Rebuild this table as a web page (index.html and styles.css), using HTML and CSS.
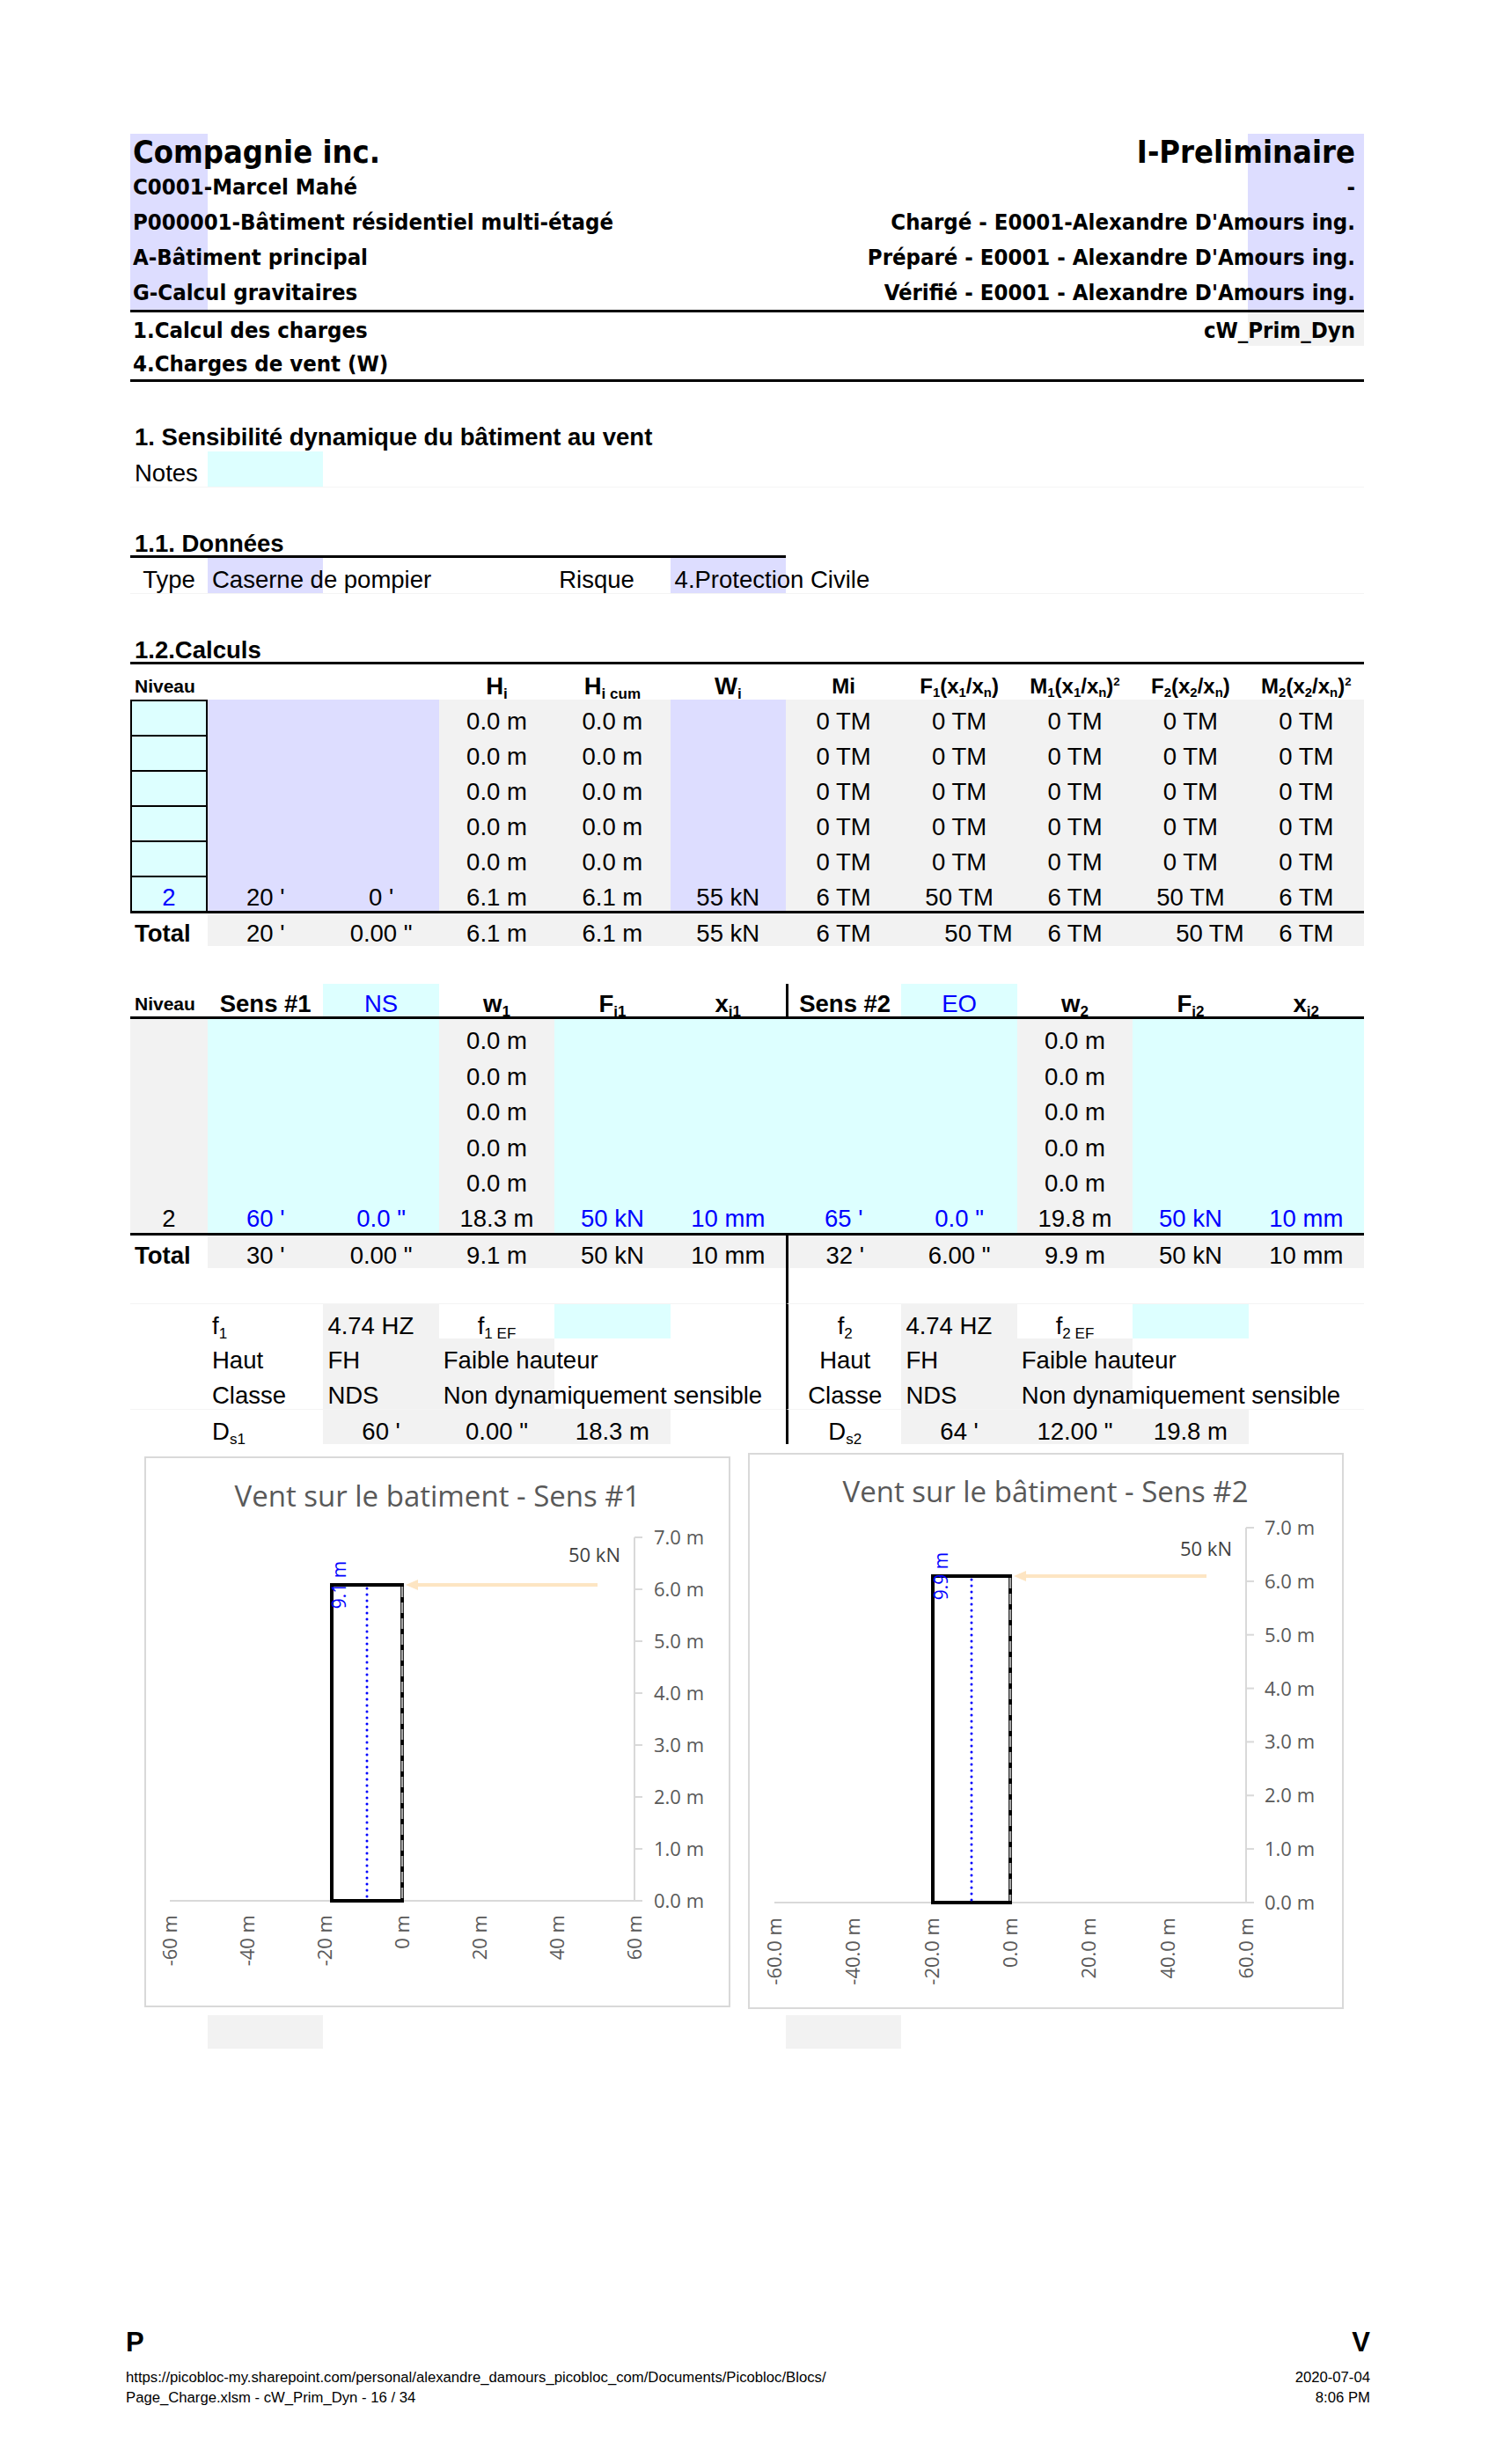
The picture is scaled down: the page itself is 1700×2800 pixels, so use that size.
FILE: index.html
```html
<!DOCTYPE html>
<html lang="fr">
<head>
<meta charset="utf-8">
<title>cW_Prim_Dyn</title>
<link rel="stylesheet" href="styles.css">
</head>
<body>
<div class="page">
  <header class="hdr">
    <div class="hdr-top">
      <div class="hrow big"><span>Compagnie inc.</span><span>I-Preliminaire</span></div>
      <div class="hrow"><span>C0001-Marcel Mahé</span><span>-</span></div>
      <div class="hrow"><span>P000001-Bâtiment résidentiel multi-étagé</span><span>Chargé - E0001-Alexandre D'Amours ing.</span></div>
      <div class="hrow"><span>A-Bâtiment principal</span><span>Préparé - E0001 - Alexandre D'Amours ing.</span></div>
      <div class="hrow"><span>G-Calcul gravitaires</span><span>Vérifié - E0001 - Alexandre D'Amours ing.</span></div>
    </div>
    <div class="hdr-bot">
      <div class="hrow gray-r"><span>1.Calcul des charges</span><span>cW_Prim_Dyn</span></div>
      <div class="hrow"><span>4.Charges de vent (W)</span><span></span></div>
    </div>
  </header>

  <section class="sheet">
    <div class="sp39"></div>
    <div class="sec">1. Sensibilité dynamique du bâtiment au vent</div>
    <div class="grid faint">
      <div class="c l">Notes</div><div class="c cy"></div>
    </div>
    <div class="sp40"></div>
    <div class="sec donnees">1.1. Données</div>
    <div class="grid faint">
      <div class="c">Type</div>
      <div class="c l lv">Caserne de pompier</div>
      <div class="c"></div><div class="c"></div>
      <div class="c l">Risque</div>
      <div class="c l lv">4.Protection Civile</div>
    </div>
    <div class="sp40"></div>
    <div class="sec rule">1.2.Calculs</div>

    <div class="grid t1">
      <div class="c l b sm">Niveau</div><div class="c"></div><div class="c"></div>
      <div class="c b">H<sub>i</sub></div><div class="c b">H<sub>i cum</sub></div><div class="c b">W<sub>i</sub></div>
      <div class="c b md">Mi</div>
      <div class="c b md">F<sub>1</sub>(x<sub>1</sub>/x<sub>n</sub>)</div>
      <div class="c b md">M<sub>1</sub>(x<sub>1</sub>/x<sub>n</sub>)<sup>2</sup></div>
      <div class="c b md">F<sub>2</sub>(x<sub>2</sub>/x<sub>n</sub>)</div>
      <div class="c b md">M<sub>2</sub>(x<sub>2</sub>/x<sub>n</sub>)<sup>2</sup></div>

      <div class="c nv"></div><div class="c lv"></div><div class="c lv"></div><div class="c gy">0.0 m</div><div class="c gy">0.0 m</div><div class="c lv"></div><div class="c gy">0 TM</div><div class="c gy">0 TM</div><div class="c gy">0 TM</div><div class="c gy">0 TM</div><div class="c gy">0 TM</div>
      <div class="c nv"></div><div class="c lv"></div><div class="c lv"></div><div class="c gy">0.0 m</div><div class="c gy">0.0 m</div><div class="c lv"></div><div class="c gy">0 TM</div><div class="c gy">0 TM</div><div class="c gy">0 TM</div><div class="c gy">0 TM</div><div class="c gy">0 TM</div>
      <div class="c nv"></div><div class="c lv"></div><div class="c lv"></div><div class="c gy">0.0 m</div><div class="c gy">0.0 m</div><div class="c lv"></div><div class="c gy">0 TM</div><div class="c gy">0 TM</div><div class="c gy">0 TM</div><div class="c gy">0 TM</div><div class="c gy">0 TM</div>
      <div class="c nv"></div><div class="c lv"></div><div class="c lv"></div><div class="c gy">0.0 m</div><div class="c gy">0.0 m</div><div class="c lv"></div><div class="c gy">0 TM</div><div class="c gy">0 TM</div><div class="c gy">0 TM</div><div class="c gy">0 TM</div><div class="c gy">0 TM</div>
      <div class="c nv"></div><div class="c lv"></div><div class="c lv"></div><div class="c gy">0.0 m</div><div class="c gy">0.0 m</div><div class="c lv"></div><div class="c gy">0 TM</div><div class="c gy">0 TM</div><div class="c gy">0 TM</div><div class="c gy">0 TM</div><div class="c gy">0 TM</div>
      <div class="c nv blu">2</div><div class="c lv">20 '</div><div class="c lv">0 '</div><div class="c gy">6.1 m</div><div class="c gy">6.1 m</div><div class="c lv">55 kN</div><div class="c gy">6 TM</div><div class="c gy">50 TM</div><div class="c gy">6 TM</div><div class="c gy">50 TM</div><div class="c gy">6 TM</div>

      <div class="c l b tt">Total</div><div class="c gy tt">20 '</div><div class="c gy tt">0.00 "</div><div class="c gy tt">6.1 m</div><div class="c gy tt">6.1 m</div><div class="c gy tt">55 kN</div><div class="c gy tt">6 TM</div><div class="c gy tt r">50 TM</div><div class="c gy tt">6 TM</div><div class="c gy tt r">50 TM</div><div class="c gy tt">6 TM</div>
    </div>

    <div class="sp43"></div>

    <div class="grid t2">
      <div class="c l b sm hb">Niveau</div><div class="c b hb">Sens #1</div><div class="c cy blu hb">NS</div>
      <div class="c b hb">w<sub>1</sub></div><div class="c b hb">F<sub>i1</sub></div><div class="c b hb">x<sub>i1</sub></div>
      <div class="c b hb vl">Sens #2</div><div class="c cy blu hb">EO</div>
      <div class="c b hb">w<sub>2</sub></div><div class="c b hb">F<sub>i2</sub></div><div class="c b hb">x<sub>i2</sub></div>

      <div class="c gy"></div><div class="c cy"></div><div class="c cy"></div><div class="c gy">0.0 m</div><div class="c cy"></div><div class="c cy"></div><div class="c cy"></div><div class="c cy"></div><div class="c gy">0.0 m</div><div class="c cy"></div><div class="c cy"></div>
      <div class="c gy"></div><div class="c cy"></div><div class="c cy"></div><div class="c gy">0.0 m</div><div class="c cy"></div><div class="c cy"></div><div class="c cy"></div><div class="c cy"></div><div class="c gy">0.0 m</div><div class="c cy"></div><div class="c cy"></div>
      <div class="c gy"></div><div class="c cy"></div><div class="c cy"></div><div class="c gy">0.0 m</div><div class="c cy"></div><div class="c cy"></div><div class="c cy"></div><div class="c cy"></div><div class="c gy">0.0 m</div><div class="c cy"></div><div class="c cy"></div>
      <div class="c gy"></div><div class="c cy"></div><div class="c cy"></div><div class="c gy">0.0 m</div><div class="c cy"></div><div class="c cy"></div><div class="c cy"></div><div class="c cy"></div><div class="c gy">0.0 m</div><div class="c cy"></div><div class="c cy"></div>
      <div class="c gy"></div><div class="c cy"></div><div class="c cy"></div><div class="c gy">0.0 m</div><div class="c cy"></div><div class="c cy"></div><div class="c cy"></div><div class="c cy"></div><div class="c gy">0.0 m</div><div class="c cy"></div><div class="c cy"></div>
      <div class="c gy">2</div><div class="c cy blu">60 '</div><div class="c cy blu">0.0 "</div><div class="c gy">18.3 m</div><div class="c cy blu">50 kN</div><div class="c cy blu">10 mm</div><div class="c cy blu">65 '</div><div class="c cy blu">0.0 "</div><div class="c gy">19.8 m</div><div class="c cy blu">50 kN</div><div class="c cy blu">10 mm</div>

      <div class="c l b tt">Total</div><div class="c gy tt">30 '</div><div class="c gy tt">0.00 "</div><div class="c gy tt">9.1 m</div><div class="c gy tt">50 kN</div><div class="c gy tt">10 mm</div><div class="c gy tt vl">32 '</div><div class="c gy tt">6.00 "</div><div class="c gy tt">9.9 m</div><div class="c gy tt">50 kN</div><div class="c gy tt">10 mm</div>
    </div>

    <div class="grid t3">
      <div class="c"></div><div class="c"></div><div class="c"></div><div class="c"></div><div class="c"></div><div class="c"></div><div class="c vl"></div><div class="c"></div><div class="c"></div><div class="c"></div><div class="c"></div>

      <div class="c ft"></div><div class="c l ft">f<sub>1</sub></div><div class="c l gy ft">4.74 HZ</div><div class="c ft">f<sub>1 EF</sub></div><div class="c cy ft"></div><div class="c ft"></div>
      <div class="c vl ft">f<sub>2</sub></div><div class="c l gy ft">4.74 HZ</div><div class="c ft">f<sub>2 EF</sub></div><div class="c cy ft"></div><div class="c ft"></div>

      <div class="c"></div><div class="c l">Haut</div><div class="c l gy">FH</div><div class="c l gy">Faible hauteur</div><div class="c"></div><div class="c"></div>
      <div class="c vl">Haut</div><div class="c l gy">FH</div><div class="c l gy">Faible hauteur</div><div class="c"></div><div class="c"></div>

      <div class="c"></div><div class="c l">Classe</div><div class="c l gy">NDS</div><div class="c l gy">Non dynamiquement sensible</div><div class="c"></div><div class="c"></div>
      <div class="c vl">Classe</div><div class="c l gy">NDS</div><div class="c l gy">Non dynamiquement sensible</div><div class="c"></div><div class="c"></div>

      <div class="c ft"></div><div class="c l ft">D<sub>s1</sub></div><div class="c gy ft">60 '</div><div class="c gy ft">0.00 "</div><div class="c gy ft">18.3 m</div><div class="c ft"></div>
      <div class="c vl ft">D<sub>s2</sub></div><div class="c gy ft">64 '</div><div class="c gy ft">12.00 "</div><div class="c gy ft">19.8 m</div><div class="c ft"></div>
    </div>
  </section>

  <div class="charts">
    <figure class="chart ch1">
      <svg width="662" height="622" viewBox="0 0 662 622">
        <text class="ttl" x="331" y="55" text-anchor="middle">Vent sur le batiment - Sens #1</text>
        <g class="ax">
          <line x1="27" y1="503" x2="555" y2="503"/>
          <line x1="555" y1="90" x2="555" y2="503"/>
          <line x1="555" y1="503" x2="564" y2="503"/>
          <line x1="555" y1="444" x2="564" y2="444"/>
          <line x1="555" y1="385" x2="564" y2="385"/>
          <line x1="555" y1="326" x2="564" y2="326"/>
          <line x1="555" y1="267" x2="564" y2="267"/>
          <line x1="555" y1="208" x2="564" y2="208"/>
          <line x1="555" y1="149" x2="564" y2="149"/>
          <line x1="555" y1="90" x2="564" y2="90"/>
        </g>
        <g class="lbl">
          <text x="577" y="511">0.0 m</text>
          <text x="577" y="452">1.0 m</text>
          <text x="577" y="393">2.0 m</text>
          <text x="577" y="334">3.0 m</text>
          <text x="577" y="275">4.0 m</text>
          <text x="577" y="216">5.0 m</text>
          <text x="577" y="157">6.0 m</text>
          <text x="577" y="98">7.0 m</text>
        </g>
        <g class="lbl" text-anchor="end">
          <text transform="translate(35,519) rotate(-90)">-60 m</text>
          <text transform="translate(123,519) rotate(-90)">-40 m</text>
          <text transform="translate(211,519) rotate(-90)">-20 m</text>
          <text transform="translate(299,519) rotate(-90)">0 m</text>
          <text transform="translate(387,519) rotate(-90)">20 m</text>
          <text transform="translate(475,519) rotate(-90)">40 m</text>
          <text transform="translate(563,519) rotate(-90)">60 m</text>
        </g>
        <rect x="211" y="144" width="80" height="359" fill="none" stroke="#000" stroke-width="4"/>
        <line x1="291" y1="146" x2="291" y2="501" stroke="#a6a6a6" stroke-width="2.5" stroke-dasharray="12 6"/>
        <line x1="251" y1="148" x2="251" y2="501" stroke="#0000ff" stroke-width="3" stroke-linecap="round" stroke-dasharray="0 7"/>
        <text class="bl" transform="translate(227,144) rotate(-90)" text-anchor="middle">9.1 m</text>
        <line x1="513" y1="144" x2="305" y2="144" stroke="#fde5c3" stroke-width="4"/>
        <path d="M295 144 L309 138 L309 150 Z" fill="#fde5c3"/>
        <text class="kn" x="480" y="118">50 kN</text>
      </svg>
    </figure>
    <figure class="chart ch2">
      <svg width="673" height="628" viewBox="0 0 673 628">
        <text class="ttl" x="336" y="54" text-anchor="middle">Vent sur le bâtiment - Sens #2</text>
        <g class="ax">
          <line x1="28" y1="509" x2="564" y2="509"/>
          <line x1="564" y1="83" x2="564" y2="509"/>
          <line x1="564" y1="509" x2="573" y2="509"/>
          <line x1="564" y1="448.1" x2="573" y2="448.1"/>
          <line x1="564" y1="387.3" x2="573" y2="387.3"/>
          <line x1="564" y1="326.4" x2="573" y2="326.4"/>
          <line x1="564" y1="265.6" x2="573" y2="265.6"/>
          <line x1="564" y1="204.7" x2="573" y2="204.7"/>
          <line x1="564" y1="143.9" x2="573" y2="143.9"/>
          <line x1="564" y1="83" x2="573" y2="83"/>
        </g>
        <g class="lbl">
          <text x="585" y="517">0.0 m</text>
          <text x="585" y="456">1.0 m</text>
          <text x="585" y="395">2.0 m</text>
          <text x="585" y="334">3.0 m</text>
          <text x="585" y="274">4.0 m</text>
          <text x="585" y="213">5.0 m</text>
          <text x="585" y="152">6.0 m</text>
          <text x="585" y="91">7.0 m</text>
        </g>
        <g class="lbl" text-anchor="end">
          <text transform="translate(36,526) rotate(-90)">-60.0 m</text>
          <text transform="translate(125,526) rotate(-90)">-40.0 m</text>
          <text transform="translate(215,526) rotate(-90)">-20.0 m</text>
          <text transform="translate(304,526) rotate(-90)">0.0 m</text>
          <text transform="translate(393,526) rotate(-90)">20.0 m</text>
          <text transform="translate(483,526) rotate(-90)">40.0 m</text>
          <text transform="translate(572,526) rotate(-90)">60.0 m</text>
        </g>
        <rect x="208" y="138" width="88" height="371" fill="none" stroke="#000" stroke-width="4"/>
        <line x1="296" y1="140" x2="296" y2="507" stroke="#a6a6a6" stroke-width="2.5" stroke-dasharray="12 6"/>
        <line x1="252" y1="142" x2="252" y2="507" stroke="#0000ff" stroke-width="3" stroke-linecap="round" stroke-dasharray="0 7"/>
        <text class="bl" transform="translate(225,138) rotate(-90)" text-anchor="middle">9.9 m</text>
        <line x1="519" y1="138" x2="310" y2="138" stroke="#fde5c3" stroke-width="4"/>
        <path d="M300 138 L314 132 L314 144 Z" fill="#fde5c3"/>
        <text class="kn" x="489" y="115">50 kN</text>
      </svg>
    </figure>
  </div>

  <div class="grid below">
    <div class="c"></div><div class="c gy"></div><div class="c"></div><div class="c"></div><div class="c"></div><div class="c"></div><div class="c gy"></div>
  </div>

  <footer class="foot">
    <div class="foot-top"><span>P</span><span>V</span></div>
    <div class="foot-bot">
      <div>https://picobloc-my.sharepoint.com/personal/alexandre_damours_picobloc_com/Documents/Picobloc/Blocs/<br>Page_Charge.xlsm - cW_Prim_Dyn - 16 / 34</div>
      <div class="fr">2020-07-04<br>8:06 PM</div>
    </div>
  </footer>
</div>
</body>
</html>
```

FILE: styles.css
```css
* { box-sizing: border-box; }
html, body { margin: 0; padding: 0; background: #fff; }
body { font-family: "Liberation Sans", Arial, Helvetica, sans-serif; color: #000; }

.page {
  width: 1700px;
  height: 2800px;
  padding: 152px 150px 64px 148px;
  display: flex;
  flex-direction: column;
}

/* ---------- header ---------- */
.hdr {
  width: 1402px;
  font-family: "DejaVu Sans Condensed", "DejaVu Sans", sans-serif;
  font-stretch: semi-condensed;
  font-weight: 700;
}
.hdr-top {
  background: linear-gradient(to right, #ddddff 0 88px, transparent 88px 1270px, #ddddff 1270px 1402px);
  border-bottom: 3px solid #000;
}
.hdr-bot { border-bottom: 3px solid #000; }
.hrow {
  display: flex;
  justify-content: space-between;
  align-items: center;
  height: 40px;
  padding: 0 10px 0 3px;
  font-size: 25.5px;
  white-space: nowrap;
}
.hrow.big { font-size: 36px; }
.hdr-bot .hrow { height: 38px; padding-top: 2px; }
.hrow.gray-r { background: linear-gradient(to right, transparent 0 1270px, #f2f2f2 1270px 1402px); }

/* ---------- sheet ---------- */
.sheet { width: 1402px; }
.sp39 { height: 39px; }
.sp40 { height: 40px; }
.sp43 { height: 43px; }

.sec {
  height: 40px;
  padding: 6px 5px 0;
  font-size: 27.5px;
  line-height: 35px;
  font-weight: 700;
  white-space: nowrap;
}
.sec.donnees { width: 745px; border-bottom: 3px solid #000; }
.sec.rule { border-bottom: 3px solid #000; }

.grid {
  display: grid;
  grid-template-columns: 88px repeat(10, 1fr);
  grid-auto-rows: 40px;
  width: 1402px;
}
.grid.faint { border-bottom: 1px solid #f4f4f4; }
.t2 { grid-auto-rows: 40.4px; }
.t3 { grid-template-rows: 40px repeat(4, 40px); }

.c {
  font-size: 27.5px;
  line-height: 35px;
  padding: 7px 5px 0;
  text-align: center;
  white-space: nowrap;
  min-width: 0;
}
.c.l { text-align: left; }
.c.r { text-align: right; }
.b { font-weight: 700; }
.c.sm { font-size: 21px; }
.c.md { font-size: 24px; }
.blu { color: #0000ff; }

.cy { background: #ddffff; }
.lv { background: #ddddff; }
.gy { background: #f2f2f2; }

.nv { background: #ddffff; border: 2px solid #000; border-bottom: 0; padding-top: 5px; }
.tt { border-top: 3px solid #000; padding-top: 5px; }
.hb { border-bottom: 3px solid #000; padding-top: 5px; }
.vl { border-left: 3px solid #000; }
.ft { border-top: 1px solid #f4f4f4; }

sub { font-size: 0.62em; vertical-align: -0.3em; line-height: 0; }
sup { font-size: 0.55em; vertical-align: 0.7em; line-height: 0; }

/* ---------- charts ---------- */
.charts {
  display: flex;
  align-items: flex-start;
  gap: 20px;
  margin-top: 10px;
  padding-left: 16px;
}
.chart {
  margin: 0;
  border: 2px solid #d9d9d9;
  background: #fff;
}
.chart svg { display: block; }
.ch1 { width: 666px; height: 626px; margin-top: 4px; }
.ch2 { width: 677px; height: 632px; }
.chart text { font-family: "Open Sans", "Noto Sans", sans-serif; }
.chart .ttl { font-size: 33px; fill: #595959; }
.chart .lbl text { font-size: 22px; fill: #595959; }
.chart .kn { font-size: 22px; fill: #404040; }
.chart .bl { font-size: 21px; fill: #0000ff; }
.ax line { stroke: #d9d9d9; stroke-width: 2; }

.grid.below { margin-top: 7px; grid-auto-rows: 38px; }

/* ---------- footer ---------- */
.foot {
  margin-top: auto;
  margin-left: -5px;
  width: 1414px;
}
.foot-top {
  display: flex;
  justify-content: space-between;
  font-weight: 700;
  font-size: 31px;
  line-height: 34px;
}
.foot-bot {
  display: flex;
  justify-content: space-between;
  margin-top: 11px;
  font-size: 16.7px;
  line-height: 23px;
}
.fr { text-align: right; }
```
